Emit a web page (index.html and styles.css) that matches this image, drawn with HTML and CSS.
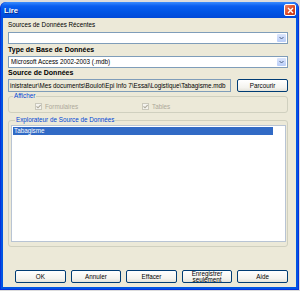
FILE: index.html
```html
<!DOCTYPE html>
<html lang="fr">
<head>
  <meta charset="UTF-8">
  <title>Lire</title>
  <link rel="stylesheet" href="styles.css">
</head>
<body>
  <div class="window">
    <div class="titlebar">
      <span class="title">Lire</span>
      <span class="close-btn">
        <svg width="7" height="7" viewBox="0 0 7 7"><path d="M1 1 L6 6 M6 1 L1 6" stroke="#fff" stroke-width="1.4"/></svg>
      </span>
    </div>
    <div class="client">
      <div class="label">Sources de Données Récentes</div>
      <div class="combo first">
        <span class="combo-text"></span>
        <span class="combo-arrow">
          <svg width="5" height="4" viewBox="0 0 5 4"><path d="M0.5 1 L2.5 3 L4.5 1" stroke="#4d6185" stroke-width="1" fill="none"/></svg>
        </span>
      </div>
      <div class="label bold">Type de Base de Données</div>
      <div class="combo second">
        <span class="combo-text">Microsoft Access 2002-2003 (.mdb)</span>
        <span class="combo-arrow">
          <svg width="5" height="4" viewBox="0 0 5 4"><path d="M0.5 1 L2.5 3 L4.5 1" stroke="#4d6185" stroke-width="1" fill="none"/></svg>
        </span>
      </div>
      <div class="label bold">Source de Données</div>
      <div class="source-row">
        <div class="textfield">inistrateur\Mes documents\Boulot\Epi Info 7\Essai\Logistique\Tabagisme.mdb</div>
        <button class="btn browse">Parcourir</button>
      </div>

      <fieldset class="group show-group">
        <legend>Afficher</legend>
        <div class="check-row">
          <label class="check"><span class="box"><svg width="5" height="5" viewBox="0 0 5 5"><path d="M0.5 2.3 L2 3.8 L4.6 1" stroke="#aca899" stroke-width="1.1" fill="none"/></svg></span>Formulaires</label>
          <label class="check"><span class="box"><svg width="5" height="5" viewBox="0 0 5 5"><path d="M0.5 2.3 L2 3.8 L4.6 1" stroke="#aca899" stroke-width="1.1" fill="none"/></svg></span>Tables</label>
        </div>
      </fieldset>

      <fieldset class="group explorer">
        <legend>Explorateur de Source de Données</legend>
        <div class="listbox">
          <div class="list-item selected">Tabagisme</div>
        </div>
      </fieldset>

      <div class="buttons">
        <button class="btn">OK</button>
        <button class="btn">Annuler</button>
        <button class="btn">Effacer</button>
        <button class="btn two-line">Enregistrer<br>seulement</button>
        <button class="btn">Aide</button>
      </div>
    </div>
  </div>
</body>
</html>
```

FILE: styles.css
```css
:root {
  --face: #ece9d8;
  --xp-blue: #0054e3;
  --frame-dark: #0831d9;
  --field-border: #7f9db9;
  --group-border: #d0d0bf;
  --legend: #0046d5;
  --select: #316ac5;
  --disabled: #aca899;
}

* {
  margin: 0;
  padding: 0;
  box-sizing: border-box;
}

body {
  background: #dcdcdc;
  font-family: "Liberation Sans", Arial, sans-serif;
  font-size: 6.3px;
  color: #000;
  width: 300px;
  height: 291px;
  overflow: hidden;
}

.window {
  width: 299px;
  height: 288px;
  margin-top: 2px;
  display: flex;
  flex-direction: column;
  background: var(--xp-blue);
  border: 1px solid var(--frame-dark);
  border-top: none;
  border-radius: 6px 6px 0 0;
}

.titlebar {
  height: 16px;
  display: flex;
  align-items: center;
  justify-content: space-between;
  padding: 0 2px 0 3px;
  background: linear-gradient(#3a8cff, #0a5ef0 25%, #0055e5 60%, #0049d8);
  border-radius: 6px 6px 0 0;
}

.title {
  color: #fff;
  font-weight: bold;
  font-size: 7.6px;
  text-shadow: 1px 1px 0 #0a2e8c;
}

.close-btn {
  width: 12px;
  height: 12px;
  display: flex;
  align-items: center;
  justify-content: center;
  background: linear-gradient(135deg, #f08a6c, #d9421d 60%, #c23a16);
  border: 1px solid #fff;
  border-radius: 2px;
}

.client {
  flex: 1;
  margin: 0 2px 2px 2px;
  background: var(--face);
  padding: 3px 8px 0 5px;
  display: flex;
  flex-direction: column;
}

.label {
  height: 8px;
  line-height: 8px;
  white-space: nowrap;
}

.bold {
  font-weight: bold;
  font-size: 7px;
}

.combo {
  height: 12px;
  background: #fff;
  border: 1px solid var(--field-border);
  display: flex;
  align-items: stretch;
}

.combo.first {
  margin: 3px 0 2px;
}

.combo.second {
  margin: 2px 0 1px;
}

.combo-text {
  flex: 1;
  padding-left: 2px;
  line-height: 10px;
  white-space: nowrap;
}

.combo-arrow {
  width: 9px;
  margin: 1px;
  display: flex;
  align-items: center;
  justify-content: center;
  background: linear-gradient(#dbe6fd, #b9cdf8);
  border-radius: 1px;
}

.source-row {
  display: flex;
  gap: 6px;
  height: 13px;
  margin-top: 2px;
}

.textfield {
  width: 223px;
  border: 1px solid var(--field-border);
  background: var(--face);
  line-height: 11px;
  padding-left: 1px;
  white-space: nowrap;
  overflow: hidden;
}

.btn {
  font-family: "Liberation Sans", Arial, sans-serif;
  font-size: 6.3px;
  color: #000;
  background: linear-gradient(#ffffff, #f4f3ee 70%, #e3e2da);
  border: 1px solid #003c74;
  border-radius: 2px;
  height: 13px;
  line-height: 11px;
}

.browse {
  width: 51px;
}

.group {
  border: 1px solid var(--group-border);
  border-radius: 3px;
  min-width: 0;
}

.group legend {
  color: var(--legend);
  line-height: 8px;
  padding: 0 1px;
  margin-left: 4px;
}

.check-row {
  display: flex;
  height: 12px;
  align-items: center;
  padding-left: 26px;
}

.check {
  display: flex;
  align-items: center;
  gap: 3px;
  color: var(--disabled);
}

.check:first-child {
  width: 107px;
}

.box {
  width: 7px;
  height: 7px;
  border: 1px solid #cac8bb;
  background: #f4f3ee;
  display: flex;
  align-items: center;
  justify-content: center;
}

.explorer {
  margin-top: 3px;
  padding: 1px 1px 4px 2px;
}

.listbox {
  height: 117px;
  background: #fff;
  border: 1px solid #b8c4d4;
  padding: 1px 12px 0 1px;
}

.list-item {
  height: 8px;
  line-height: 8px;
  padding-left: 1px;
}

.list-item.selected {
  background: var(--select);
  color: #fff;
}

.buttons {
  display: flex;
  gap: 5px;
  margin-top: 23px;
  padding-left: 7px;
}

.buttons .btn {
  width: 51px;
}

.two-line {
  line-height: 6px;
  overflow: visible;
}
```
